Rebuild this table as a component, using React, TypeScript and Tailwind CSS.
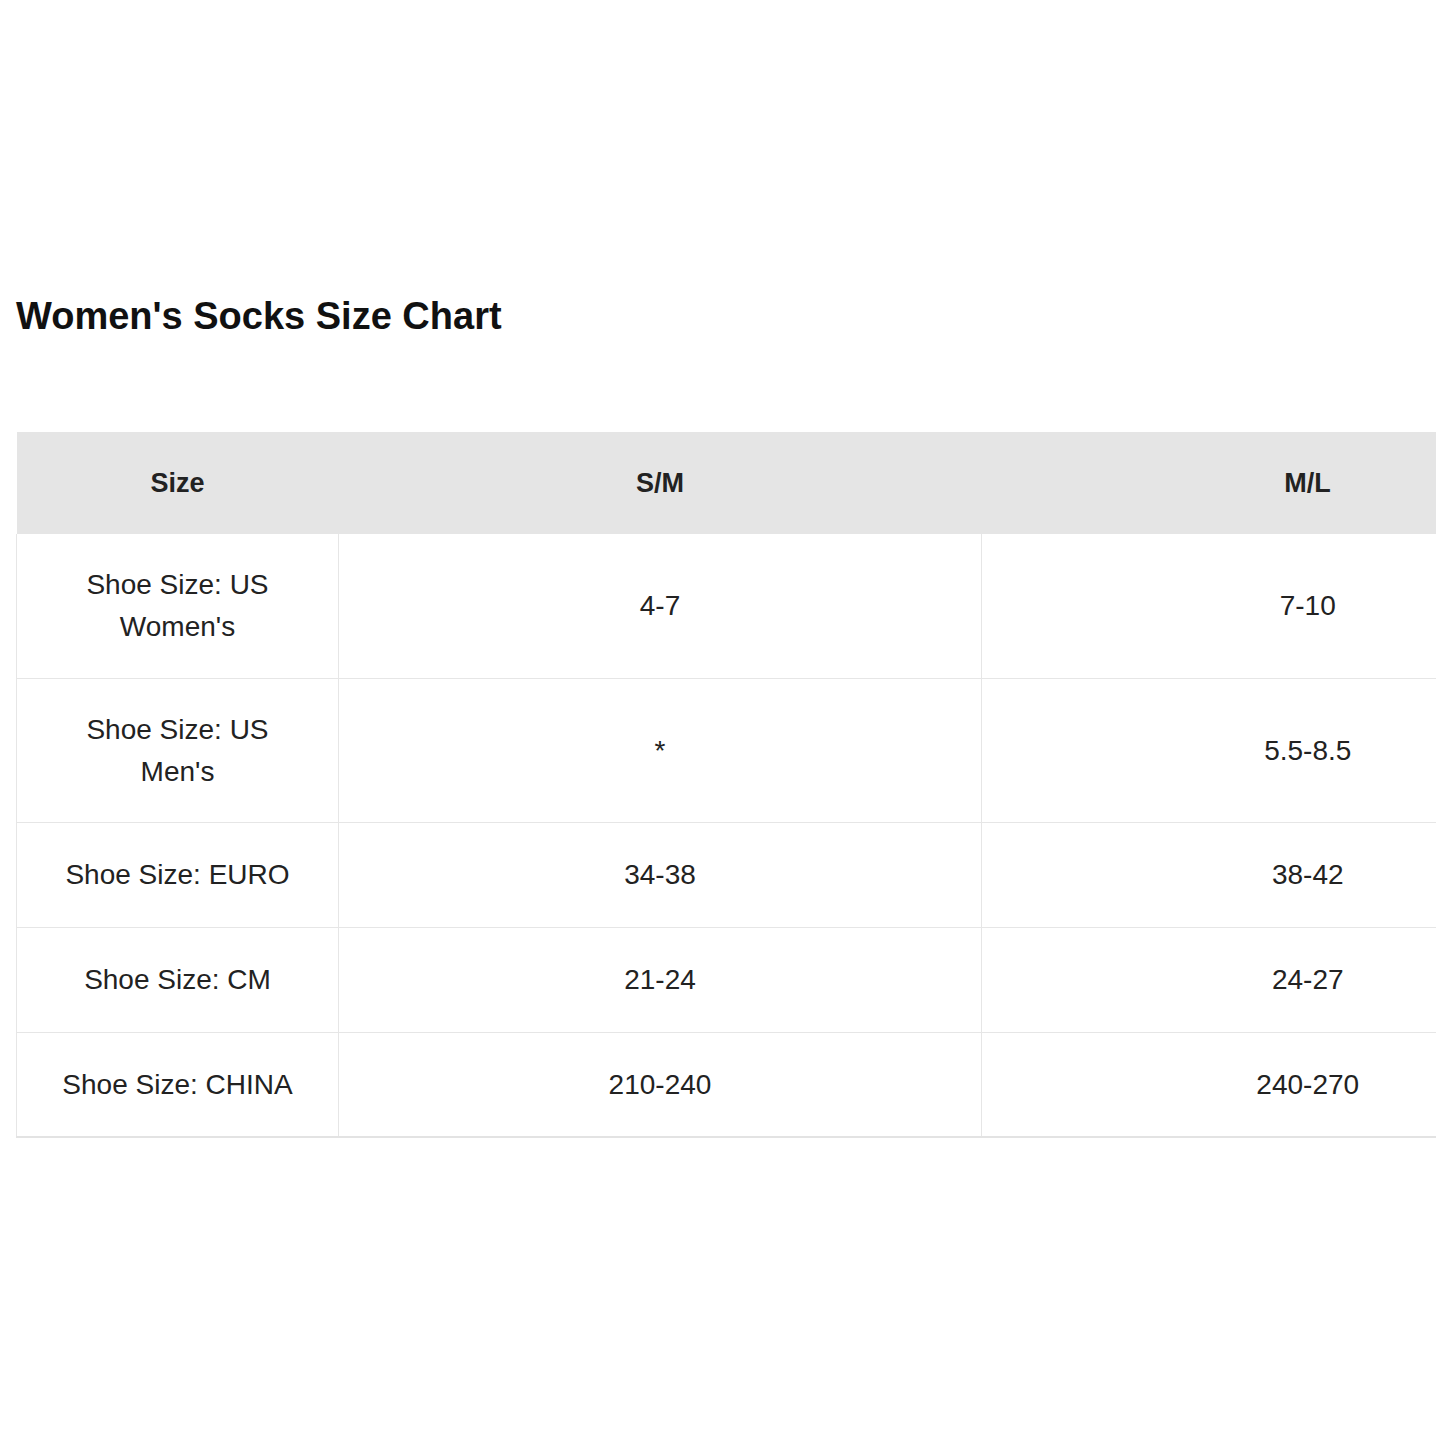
const rows: { label: string[]; sm: string; ml: string; pad: string }[] = [
  { label: ["Shoe Size: US", "Women's"], sm: "4-7", ml: "7-10", pad: "py-[30px]" },
  { label: ["Shoe Size: US", "Men's"], sm: "*", ml: "5.5-8.5", pad: "pt-[30px] pb-[29px]" },
  { label: ["Shoe Size: EURO"], sm: "34-38", ml: "38-42", pad: "py-[31px]" },
  { label: ["Shoe Size: CM"], sm: "21-24", ml: "24-27", pad: "py-[31px]" },
  { label: ["Shoe Size: CHINA"], sm: "210-240", ml: "240-270", pad: "pt-[31px] pb-[30px]" },
];

export default function App() {
  return (
    <div className="min-h-[1445px] w-[1445px] bg-white font-['Liberation_Sans',Arial,sans-serif] text-[#222]">
      <div className="pl-4 pt-[292px]">
        <h1 className="text-[38px] font-bold leading-[48px] text-[#111]">
          Women's Socks Size Chart
        </h1>

        {/* Table is wider than the viewport and gets clipped on the right */}
        <div className="mt-[92px] w-[1420px] overflow-hidden">
          <table className="w-[1617px] table-fixed border-collapse text-center text-[28px] leading-[42px]">
            <colgroup>
              <col className="w-[322px]" />
              <col className="w-[643px]" />
              <col className="w-[652px]" />
            </colgroup>
            <thead>
              <tr className="bg-[#e5e5e5] text-[27px]">
                <th className="py-[30px] font-bold">Size</th>
                <th className="py-[30px] font-bold">S/M</th>
                <th className="py-[30px] font-bold">M/L</th>
              </tr>
            </thead>
            <tbody>
              {rows.map((r, i) => (
                <tr
                  key={r.label.join(" ")}
                  className={
                    i === rows.length - 1
                      ? "border-b-2 border-[#e3e3e3]"
                      : "border-b border-[#e6e6e6]"
                  }
                >
                  <td className={`border-x border-[#e6e6e6] ${r.pad}`}>
                    {r.label.map((l) => (
                      <div key={l}>{l}</div>
                    ))}
                  </td>
                  <td className={`border-r border-[#e6e6e6] ${r.pad}`}>{r.sm}</td>
                  <td className={r.pad}>{r.ml}</td>
                </tr>
              ))}
            </tbody>
          </table>
        </div>
      </div>
    </div>
  );
}
